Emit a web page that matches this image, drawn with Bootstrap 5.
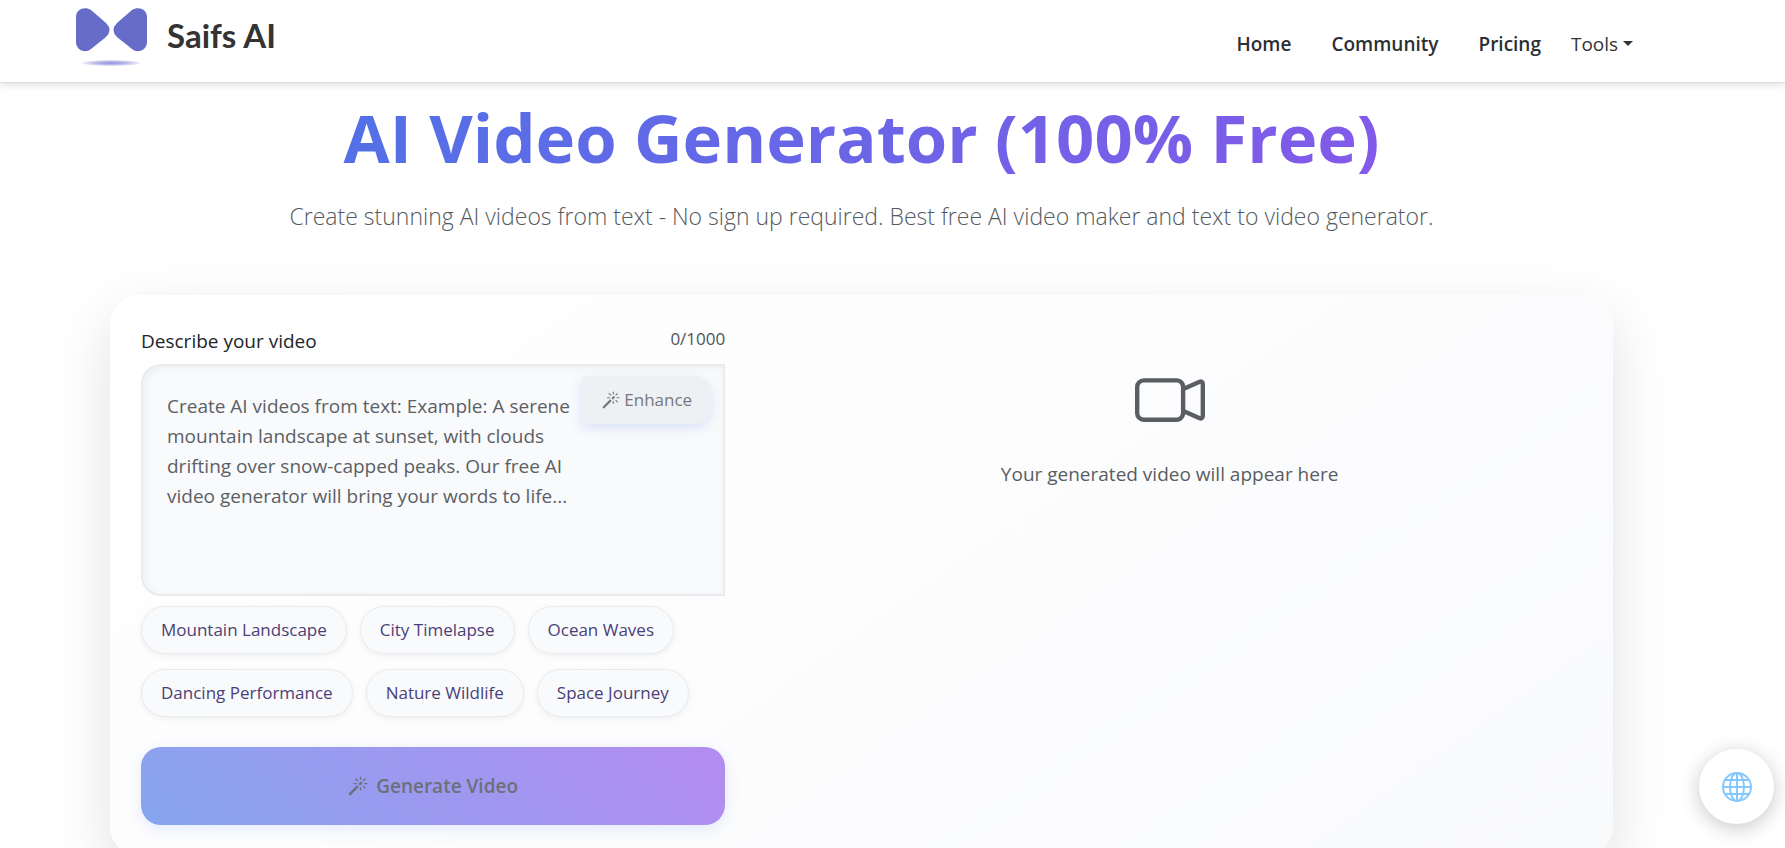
<!DOCTYPE html>
<html lang="en">
<head>
<meta charset="utf-8">
<meta name="viewport" content="width=device-width, initial-scale=1">
<title>AI Video Generator</title>
<link href="https://cdn.jsdelivr.net/npm/bootstrap@5.3.0/dist/css/bootstrap.min.css" rel="stylesheet">
<style>
  body { font-family: "Open Sans", sans-serif; font-size: 19px; line-height: 30px; color: #212529; background: #fff; }
  .site-nav { height: 83px; padding: 0 152px 0 75px; border-bottom: 1px solid #dcdce6; box-shadow: 0 2px 8px rgba(0,0,0,.12); background: #fff; }
  .brand-mark { margin-bottom: 6px; }
  .brand-name { font-family: Lato, sans-serif; font-weight: 700; font-size: 33px; color: #333; padding: 0 0 12px 2px; }
  .site-nav .navbar-nav { padding-top: 6px; }
  .site-nav .navbar-nav .nav-link { font-size: 19px; font-weight: 600; color: #2b2f33; padding: 6px 20px; }
  .site-nav .navbar-nav .tools-link { font-weight: 500; color: #333; padding: 6px 0 6px 10px; }
  .page-main { padding: 17px 172px 40px 110px; }
  .page-title { font-size: 67px; line-height: 75px; font-weight: 700; margin-bottom: 22px; color: transparent; background: linear-gradient(135deg, #4776e6, #8e54e9); -webkit-background-clip: text; background-clip: text; }
  .page-subtitle { font-size: 23px; line-height: 38px; font-weight: 300; color: #555a60; margin-bottom: 60px; }
  .maker { border-radius: 30px; padding: 31px; background: linear-gradient(145deg, #fff, #f9fafc); box-shadow: 0 20px 60px rgba(0,0,0,.12); grid-template-columns: 17fr 24fr; gap: 32px; }
  .counter { font-size: 17px; line-height: 26px; color: #4f5459; }
  .prompt-box { height: 232px; padding: 25px 150px 24px 24px; font-size: 19px; line-height: 30px; background: #f9fafc; border: 2px solid #e9ebee; border-radius: 20px 0 0 20px; box-shadow: inset 2px 2px 8px rgba(0,0,0,.05); resize: none; }
  .prompt-box::placeholder { color: #5c6065; }
  .enhance { top: 12px; right: 13px; height: 48px; width: 130px; font-size: 17px; color: #75787c; background: #eff0f4; border: 0; border-radius: 4px 18px 18px 4px; box-shadow: 0 4px 12px rgba(71,118,230,.18); }
  .chip { height: 48px; padding: 0 19px; font-size: 17px; color: #4a3f78; background: #f9fafc; border: 1px solid #e9ebee; border-radius: 24px; box-shadow: 0 2px 6px rgba(0,0,0,.06); }
  .chip-list { gap: 15px 13px; margin: 10px 0 30px; }
  .generate { height: 78px; font-size: 19px; font-weight: 600; color: #6b7178; border: 0; border-radius: 20px; background: linear-gradient(45deg, #86a5ef, #b48cf0); box-shadow: 0 4px 15px rgba(71,118,230,.14); }
  .preview { color: #5a5d62; padding-top: 39px; }
  .globe-btn { width: 75px; height: 75px; right: 11px; bottom: 24px; background: #fff; color: #84c8ff; border: 0; box-shadow: 0 4px 20px rgba(0,0,0,.22); }
</style>
</head>
<body>
<svg class="d-none" aria-hidden="true">
  <symbol id="wand" viewBox="0 0 16 16"><path fill="currentColor" d="M9.5 2.672a.5.5 0 1 0 1 0V.843a.5.5 0 0 0-1 0v1.829Zm4.5.035A.5.5 0 0 0 13.293 2L12 3.293a.5.5 0 1 0 .707.707L14 2.707ZM7.293 4A.5.5 0 1 0 8 3.293L6.707 2A.5.5 0 0 0 6 2.707L7.293 4Zm-.621 2.5a.5.5 0 1 0 0-1H4.843a.5.5 0 1 0 0 1h1.829Zm8.485 0a.5.5 0 1 0 0-1h-1.829a.5.5 0 0 0 0 1h1.829ZM13.293 10A.5.5 0 1 0 14 9.293L12.707 8a.5.5 0 1 0-.707.707L13.293 10ZM9.5 11.157a.5.5 0 0 0 1 0V9.328a.5.5 0 0 0-1 0v1.829Zm1.854-5.097a.5.5 0 0 0 0-.706l-.708-.708a.5.5 0 0 0-.707 0L8.646 5.94a.5.5 0 0 0 0 .707l.708.708a.5.5 0 0 0 .707 0l1.293-1.293Zm-3 3a.5.5 0 0 0 0-.706l-.708-.708a.5.5 0 0 0-.707 0L.646 13.94a.5.5 0 0 0 0 .707l.707.707a.5.5 0 0 0 .707 0L8.354 9.06Z"/></symbol>
</svg>

<nav class="site-nav navbar navbar-expand flex-nowrap">
  <a class="navbar-brand d-flex align-items-center p-0 m-0 gap-3" href="#">
    <svg class="brand-mark" width="74" height="66" viewBox="0 0 74 66" aria-hidden="true">
      <defs><radialGradient id="glow"><stop offset="0" stop-color="#8f92dc"/><stop offset=".5" stop-color="#b5b7e8"/><stop offset="1" stop-color="#eeeefa"/></radialGradient></defs>
      <path fill="#666cc7" d="M1 12C1 4 10 1 16 5L31 18Q38 25 31 32L16 44C10 49 1 45 1 37Z"/>
      <path fill="#666cc7" d="M72 12C72 4 63 1 57 5L42 18Q35 25 42 32L57 44C63 49 72 45 72 37Z"/>
      <ellipse cx="36" cy="58" rx="29" ry="3" fill="url(#glow)"/>
    </svg>
    <span class="brand-name">Saifs AI</span>
  </a>
  <ul class="navbar-nav ms-auto align-items-center">
    <li class="nav-item"><a class="nav-link" href="#">Home</a></li>
    <li class="nav-item"><a class="nav-link" href="#">Community</a></li>
    <li class="nav-item"><a class="nav-link" href="#">Pricing</a></li>
    <li class="nav-item dropdown"><a class="nav-link tools-link dropdown-toggle" href="#" role="button" data-bs-toggle="dropdown">Tools</a></li>
  </ul>
</nav>

<main class="page-main">
  <header class="text-center">
    <h1 class="page-title">AI Video Generator (100% Free)</h1>
    <p class="page-subtitle">Create stunning AI videos from text - No sign up required. Best free AI video maker and text to video generator.</p>
  </header>
  <section class="maker d-grid">
    <form class="d-flex flex-column">
      <div class="d-flex justify-content-between mb-2">
        <label for="prompt">Describe your video</label>
        <span class="counter">0/1000</span>
      </div>
      <div class="position-relative">
        <textarea id="prompt" class="prompt-box d-block w-100" placeholder="Create AI videos from text: Example: A serene mountain landscape at sunset, with clouds drifting over snow-capped peaks. Our free AI video generator will bring your words to life..."></textarea>
        <button type="button" class="enhance position-absolute d-flex align-items-center justify-content-center gap-1"><svg width="18" height="18" aria-hidden="true"><use href="#wand"/></svg>Enhance</button>
      </div>
      <div class="chip-list d-flex flex-wrap">
        <button type="button" class="chip">Mountain Landscape</button>
        <button type="button" class="chip">City Timelapse</button>
        <button type="button" class="chip">Ocean Waves</button>
        <button type="button" class="chip">Dancing Performance</button>
        <button type="button" class="chip">Nature Wildlife</button>
        <button type="button" class="chip">Space Journey</button>
      </div>
      <button type="button" class="generate d-flex align-items-center justify-content-center gap-2"><svg width="20" height="20" aria-hidden="true"><use href="#wand"/></svg>Generate Video</button>
    </form>
    <div class="preview text-center">
      <svg class="d-block mx-auto mb-4" width="70" height="70" viewBox="0 0 16 16" fill="currentColor" aria-hidden="true"><path fill-rule="evenodd" d="M0 5a2 2 0 0 1 2-2h7.500a2 2 0 0 1 1.983 1.738l3.110-1.382A1 1 0 0 1 16 4.269v7.462a1 1 0 0 1-1.406.913l-3.111-1.382A2 2 0 0 1 9.500 13H2a2 2 0 0 1-2-2V5zm11.500 5.175 3.500 1.556V4.269l-3.500 1.556v4.350zM2 4a1 1 0 0 0-1 1v6a1 1 0 0 0 1 1h7.500a1 1 0 0 0 1-1V5a1 1 0 0 0-1-1H2z"/></svg>
      <p class="mb-0">Your generated video will appear here</p>
    </div>
  </section>
</main>

<button type="button" class="globe-btn position-fixed rounded-circle d-flex align-items-center justify-content-center p-0" aria-label="Language">
  <svg width="30" height="30" viewBox="0 0 30 30" fill="none" stroke="currentColor" stroke-width="2" aria-hidden="true"><circle cx="15" cy="15" r="14"/><ellipse cx="15" cy="15" rx="7" ry="14"/><path d="M15 1v28M1 15h28M3 8h24M3 22h24"/></svg>
</button>
<script src="https://cdn.jsdelivr.net/npm/bootstrap@5.3.0/dist/js/bootstrap.bundle.min.js"></script>
</body>
</html>
